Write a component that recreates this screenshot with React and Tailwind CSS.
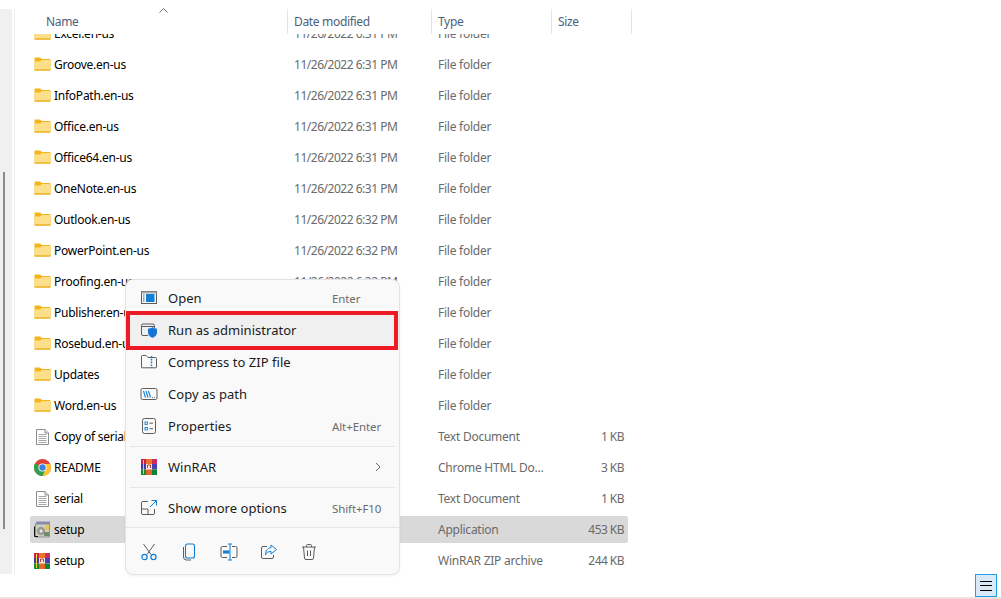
const font = { fontFamily: '"Noto Sans", "Open Sans", sans-serif' };

function Folder() {
  return (
    <svg width="17" height="16" viewBox="0 0 17 16" className="shrink-0 -mt-[2px]">
      <path d="M0.5 2.5 a1 1 0 0 1 1-1 H6 L8 3 H15.5 a1 1 0 0 1 1 1 V13.5 a1 1 0 0 1-1 1 H1.5 a1 1 0 0 1-1-1 Z" fill="#f3b519" />
      <path d="M0.5 5.5 L6 5.5 L8 4 H16.5 V13 a.8.8 0 0 1-.8.8 H1.3 a.8.8 0 0 1-.8-.8 Z" fill="#fcdf8a" />
      <rect x="0.5" y="13.5" width="16" height="1" fill="#e8a80f" />
    </svg>
  );
}
function TextDoc() {
  return (
    <svg width="17" height="16" viewBox="0 0 17 16" className="shrink-0">
      <path d="M2.5 .5 H11 L14.5 4 V15.5 H2.5 Z" fill="#fff" stroke="#8e8e8e" />
      <path d="M11 .5 V4 H14.5" fill="#e8e8e8" stroke="#8e8e8e" />
      <path d="M4.5 5.5 H12.5 M4.5 7.5 H12.5 M4.5 9.5 H12.5 M4.5 11.5 H12.5 M4.5 13.5 H12.5" stroke="#a8a8a8" />
    </svg>
  );
}
function Chrome() {
  return (
    <svg width="17" height="17" viewBox="0 0 16 16" className="shrink-0">
      <circle cx="8" cy="8" r="8" fill="#e0403a" />
      <path d="M8 8 L1.07 4 A8 8 0 0 0 8 16 L12 9 Z" fill="#2fa14e" />
      <path d="M8 4.6 H15.2 A8 8 0 0 1 8 16 L11.4 8 Z" fill="#fbc52e" />
      <circle cx="8" cy="8" r="3.8" fill="#fff" />
      <circle cx="8" cy="8" r="3" fill="#3f7fe6" />
    </svg>
  );
}
function Setup() {
  return (
    <svg width="17" height="17" viewBox="0 0 17 17" className="shrink-0">
      <rect x="2" y="0.5" width="14" height="3" fill="#8a8fb5" />
      <rect x="1.5" y="3" width="14" height="13" fill="#cfd0c8" stroke="#7d7f85" strokeWidth="0.8" />
      <rect x="11" y="4" width="4" height="5" fill="#e8c94c" />
      <circle cx="7" cy="10" r="4.2" fill="#9a9c94" />
      <circle cx="7" cy="10" r="1.5" fill="#eeeeee" />
      <path d="M.5 5.5 V15.5 M.5 15.5 H4" stroke="#111" />
      <rect x="10" y="11" width="5" height="4" fill="#6f8c66" />
    </svg>
  );
}
function Rar({ size = 16 }) {
  return (
    <svg width={size} height={size} viewBox="0 0 16 16" className="shrink-0">
      <rect x="0" y="0" width="5" height="5" fill="#c8214f" />
      <rect x="5" y="0" width="6" height="5" fill="#e8772a" />
      <rect x="11" y="0" width="5" height="5" fill="#cf2a62" />
      <rect x="0" y="5" width="5" height="5.5" fill="#4438a8" />
      <rect x="5" y="5" width="6" height="5.5" fill="#f0e8de" />
      <rect x="11" y="5" width="5" height="5.5" fill="#4a40b4" />
      <rect x="0" y="10.5" width="5" height="5.5" fill="#128a35" />
      <rect x="5" y="10.5" width="6" height="5.5" fill="#e6662a" />
      <rect x="11" y="10.5" width="5" height="5.5" fill="#0f8233" />
      <rect x="2" y="1" width="1" height="14" fill="#f0d24a" />
      <path d="M6.5 9 V6 H9.5 V9" fill="none" stroke="#c23a2a" />
    </svg>
  );
}

const D1 = "11/26/2022 6:31 PM";
const D2 = "11/26/2022 6:32 PM";
const rows = [
  ["Excel.en-us", D1, "File folder", "", Folder],
  ["Groove.en-us", D1, "File folder", "", Folder],
  ["InfoPath.en-us", D1, "File folder", "", Folder],
  ["Office.en-us", D1, "File folder", "", Folder],
  ["Office64.en-us", D1, "File folder", "", Folder],
  ["OneNote.en-us", D1, "File folder", "", Folder],
  ["Outlook.en-us", D2, "File folder", "", Folder],
  ["PowerPoint.en-us", D2, "File folder", "", Folder],
  ["Proofing.en-us", D2, "File folder", "", Folder],
  ["Publisher.en-us", D2, "File folder", "", Folder],
  ["Rosebud.en-us", D2, "File folder", "", Folder],
  ["Updates", D2, "File folder", "", Folder],
  ["Word.en-us", D2, "File folder", "", Folder],
  ["Copy of serial", D2, "Text Document", "1 KB", TextDoc],
  ["README", D2, "Chrome HTML Do...", "3 KB", Chrome],
  ["serial", D2, "Text Document", "1 KB", TextDoc],
  ["setup", D2, "Application", "453 KB", Setup],
  ["setup", D2, "WinRAR ZIP archive", "244 KB", Rar],
];

function Row({ r }) {
  const Icon = r[4];
  const sel = r[0] === "setup" && r[2] === "Application";
  return (
    <div className={`flex items-center h-[27px] mb-[4px] w-[598px] rounded-[2px] text-[12px] tracking-[-0.25px] ${sel ? "bg-[#d9d9d9]" : ""}`}>
      <div className="w-[24px] pl-[4px] flex items-center"><Icon /></div>
      <div className="w-[240px] text-[#000000] whitespace-nowrap">{r[0]}</div>
      <div className="w-[144px] text-[#6a6a6a] whitespace-nowrap tracking-[-0.48px]">{r[1]}</div>
      <div className="w-[118px] text-[#6a6a6a] whitespace-nowrap">{r[2]}</div>
      <div className="w-[68px] text-right text-[#6a6a6a] whitespace-nowrap tracking-[-0.55px]">{r[3]}</div>
    </div>
  );
}

function HeaderCell({ w, children, pl = "pl-[6px]" }) {
  return (
    <div className={`h-[25px] border-r border-[#e5e5e5] flex items-center text-[12px] tracking-[-0.33px] text-[#4c607a] ${w} ${pl}`}>
      {children}
    </div>
  );
}

const S = "#5d5d5d";
const B = "#0f7fd8";
function MI({ children }) {
  return <svg width="18" height="18" viewBox="0 0 18 18" fill="none" className="shrink-0">{children}</svg>;
}
const IconOpen = () => (
  <MI>
    <rect x="1.5" y="2.5" width="15" height="12" stroke={S} />
    <rect x="1.5" y="2.5" width="15" height="2" fill="#a8a8a8" />
    <path d="M3 6 H4.5 M3 8 H4.5 M3 10 H4.5 M3 12 H4.5" stroke={S} />
    <rect x="6" y="5" width="8.5" height="8" fill="#0f7fd8" />
  </MI>
);
const IconAdmin = () => (
  <MI>
    <path d="M8 14.5 H3 a1.5 1.5 0 0 1-1.5-1.5 V4.5 A1.5 1.5 0 0 1 3 3 H13 a1.5 1.5 0 0 1 1.5 1.5 V7" stroke={S} />
    <path d="M1.5 5.5 H14" stroke={S} />
    <path d="M8 7.5 C10 7.5 11.5 7 12.5 6 C13.5 7 15 7.5 17 7.5 V11.5 C17 14 15 15.8 12.5 16.8 C10 15.8 8 14 8 11.5 Z" fill="#1574d4" />
  </MI>
);
const IconZip = () => (
  <MI>
    <path d="M1.5 14.5 V3.5 a1 1 0 0 1 1-1 H6 L8 4.5 H15.5 a1 1 0 0 1 1 1 V14 a.8.8 0 0 1-.8.8 H2 a.5.5 0 0 1-.5-.3 Z" stroke={S} />
    <path d="M11.5 3 V15" stroke={B} strokeWidth="1.4" strokeDasharray="1.6 1.2" />
  </MI>
);
const IconPath = () => (
  <MI>
    <rect x="1" y="3.5" width="16" height="11" rx="1.5" stroke={S} />
    <path d="M3.5 6 L5.5 12.5 M6 6 L8 12.5 M8.5 6 L10.5 12.5" stroke={B} strokeWidth="1.1" />
    <path d="M12 12.5 H12.8 M14 12.5 H14.8" stroke={S} />
  </MI>
);
const IconProps = () => (
  <MI>
    <rect x="2.5" y="1.5" width="13" height="15" rx="2" stroke={S} />
    <rect x="5" y="5" width="2.4" height="2.4" stroke={B} strokeWidth="0.9" />
    <rect x="5" y="10.5" width="2.4" height="2.4" stroke={B} strokeWidth="0.9" />
    <path d="M9.5 6.2 H13 M9.5 11.7 H13" stroke={S} />
  </MI>
);
const IconMore = () => (
  <MI>
    <path d="M8 2.5 H3 a1.5 1.5 0 0 0-1.5 1.5 V14 a1.5 1.5 0 0 0 1.5 1.5 H13 a1.5 1.5 0 0 0 1.5-1.5 V10" stroke={S} />
    <path d="M1.5 10 H8 V15.5" stroke={S} />
    <path d="M10 8 L16 2 M11.5 1.5 H16.5 V6.5" stroke={B} />
  </MI>
);
const IconCut = () => (
  <MI>
    <path d="M3.5 1 L11 11.5 M14.5 1 L7 11.5" stroke={S} />
    <circle cx="4.5" cy="14" r="2.6" stroke={B} strokeWidth="1.2" />
    <circle cx="13.5" cy="14" r="2.6" stroke={B} strokeWidth="1.2" />
  </MI>
);
const IconCopy = () => (
  <MI>
    <path d="M3.5 4 V14 a3 3 0 0 0 3 3 H11" stroke={S} />
    <rect x="5.5" y="1" width="9" height="14" rx="2" stroke={B} strokeWidth="1.1" />
  </MI>
);
const IconRename = () => (
  <MI>
    <path d="M7 3.5 H2.5 a1.5 1.5 0 0 0-1.5 1.5 V13 a1.5 1.5 0 0 0 1.5 1.5 H7 M12 3.5 H15.5 a1.5 1.5 0 0 1 1.5 1.5 V13 a1.5 1.5 0 0 1-1.5 1.5 H12" stroke={S} />
    <rect x="3" y="7.5" width="6.5" height="3" fill={B} />
    <path d="M8 1 H12 M10 1 V17 M8 17 H12" stroke={B} />
  </MI>
);
const IconShare = () => (
  <MI>
    <path d="M7 3.5 H3 a1.5 1.5 0 0 0-1.5 1.5 V14 a1.5 1.5 0 0 0 1.5 1.5 H12 a1.5 1.5 0 0 0 1.5-1.5 V12" stroke={S} />
    <path d="M11 2 L16.5 6.5 L11 11 V8.5 C8 8.5 6.5 9.5 5.5 12 C5.5 7.5 7.5 5 11 4.7 Z" stroke={B} />
  </MI>
);
const IconTrash = () => (
  <MI>
    <path d="M2 4 H16 M6.5 4 V2.5 a1 1 0 0 1 1-1 H10.5 a1 1 0 0 1 1 1 V4 M3.5 4 L4.5 15 a1.5 1.5 0 0 0 1.5 1.5 H12 a1.5 1.5 0 0 0 1.5-1.5 L14.5 4 M7.5 7.5 V13 M10.5 7.5 V13" stroke={S} />
  </MI>
);

function MenuItem({ icon, label, shortcut, chevron, outlined }) {
  return (
    <div className={`flex items-center h-[32px] pl-[14px] text-[13px] tracking-[0.03px] text-[#1b1b1b] ${outlined ? "bg-[#f0f0f0] relative" : ""}`}>
      <div className="w-[28px] flex items-center">{icon}</div>
      <div className="w-[164px] whitespace-nowrap pt-[2px]">{label}</div>
      {shortcut && <div className="text-[11.5px] tracking-[-0.1px] text-[#6b6b6b] whitespace-nowrap pt-[2px]">{shortcut}</div>}
      {chevron && (
        <svg width="10" height="10" viewBox="0 0 10 10" fill="none" className="ml-[41px]">
          <path d="M3 1 L7 5 L3 9" stroke="#6b6b6b" />
        </svg>
      )}
    </div>
  );
}
const Sep = ({ cls }) => <div className={`h-px bg-[#e6e6e6] ${cls}`} />;

export default function App() {
  return (
    <div className="relative w-[1001px] h-[599px] overflow-hidden bg-white flex flex-col" style={font}>
      <div className="flex h-[574px]">
        <div className="w-[15px] pt-[9px] flex">
          <div className="w-[12px] bg-[#f0f0f0] pt-[163px] pl-[3px]">
            <div className="w-[2px] h-[357px] bg-[#8a8a8a]" />
          </div>
          <div className="w-[2px]" />
          <div className="w-px bg-[#ececec]" />
        </div>
        <div className="flex-1 flex flex-col pl-[15px]">
          <div className="relative flex pt-[9px] h-[34px] shrink-0 bg-white z-10">
            <HeaderCell w="w-[258px]" pl="pl-[16px]">Name</HeaderCell>
            <HeaderCell w="w-[144px]">Date modified</HeaderCell>
            <HeaderCell w="w-[120px]">Type</HeaderCell>
            <HeaderCell w="w-[80px]">Size</HeaderCell>
            <svg width="9" height="5" viewBox="0 0 9 5" fill="none" className="absolute left-[129px] top-[8px]">
              <path d="M.5 4.5 L4.5 .5 L8.5 4.5" stroke="#6b6b6b" />
            </svg>
          </div>
          <div className="flex-1 overflow-hidden">
            <div className="-mt-[14px]">
              {rows.map((r, i) => <Row key={i} r={r} />)}
            </div>
          </div>
        </div>
      </div>
      <div className="flex justify-end h-[23px] pr-[4px]">
        <div className="w-[22px] h-[23px] border border-[#1c9fe6] bg-[#d8eaf7] flex flex-col items-center justify-center gap-[3.5px]">
          <div className="w-[12px] h-px bg-black" />
          <div className="w-[12px] h-px bg-black" />
          <div className="w-[12px] h-px bg-black" />
        </div>
      </div>
      <div className="h-[2px] bg-[#efe0db]" />

      <div className="absolute left-[125px] top-[279px] w-[275px] h-[296px] rounded-[8px] bg-[#f9f9f9] border border-[#e3e3e3] pt-[2px] shadow-[0_1px_3px_rgba(0,0,0,0.06)]">
        <MenuItem icon={<IconOpen />} label="Open" shortcut="Enter" />
        <MenuItem icon={<IconAdmin />} label="Run as administrator" outlined />
        <MenuItem icon={<IconZip />} label="Compress to ZIP file" />
        <MenuItem icon={<IconPath />} label="Copy as path" />
        <MenuItem icon={<IconProps />} label="Properties" shortcut="Alt+Enter" />
        <Sep cls="mt-[4px] mb-[4px] mx-[4px]" />
        <MenuItem icon={<div className="pl-[1px]"><Rar /></div>} label="WinRAR" chevron />
        <Sep cls="mt-[4px] mb-[4px] mx-[4px]" />
        <MenuItem icon={<IconMore />} label="Show more options" shortcut="Shift+F10" />
        <Sep cls="mt-[3px] mx-[0px]" />
        <div className="flex items-center h-[47px] pl-[14px] gap-[22px]">
          <IconCut /><IconCopy /><IconRename /><IconShare /><IconTrash />
        </div>
        <div className="absolute left-[0px] top-[31px] w-[272px] h-[39px] border-[4px] border-[#ed1c24]" />
      </div>
    </div>
  );
}
